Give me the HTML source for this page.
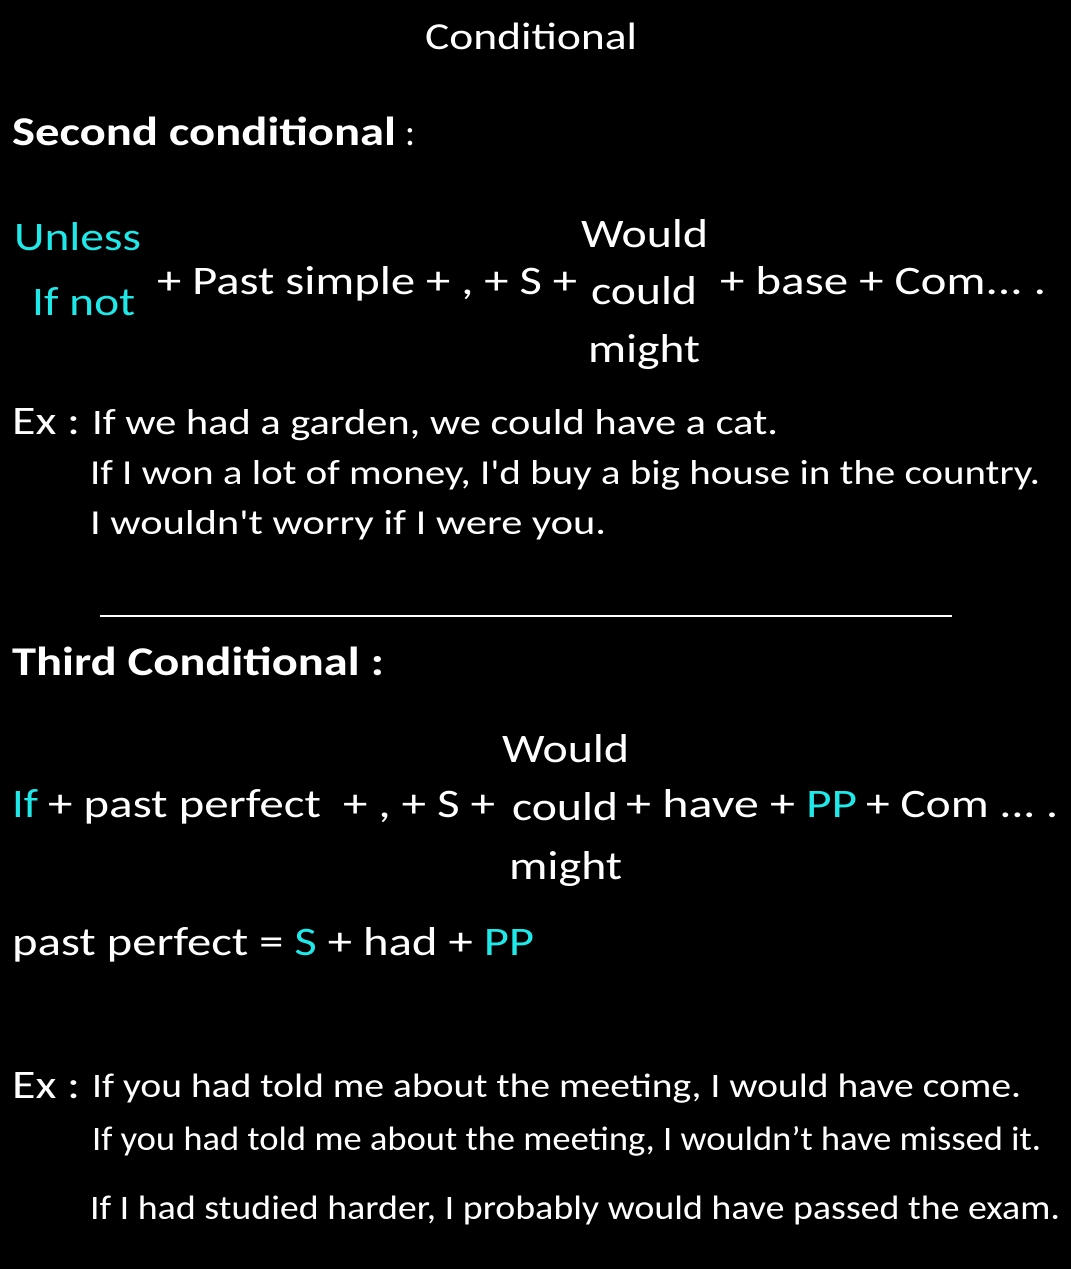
<!DOCTYPE html>
<html><head><meta charset="utf-8"><style>
html,body{margin:0;padding:0;background:#000;}
body{width:1071px;height:1269px;position:relative;overflow:hidden;font-family:"Carlito","Liberation Sans",sans-serif;color:#fff;}
.t{position:absolute;white-space:nowrap;line-height:1;transform-origin:0 0;}
.c{color:#1fe8e8;}
b{font-weight:bold;}
</style></head><body>
<span class="t" data-w="212" data-l="425" data-b="52" style="font-size:38px">Conditional</span>
<span class="t" data-w="384" data-l="12" data-b="148" style="font-size:40px"><b>Second conditional</b></span>
<span class="t" data-w="10" data-l="405" data-b="148" style="font-size:38px">:</span>
<span class="t c" data-w="127" data-l="14" data-b="253" style="font-size:40px">Unless</span>
<span class="t c" data-w="103" data-l="32" data-b="318" style="font-size:40px">If not</span>
<span class="t" data-w="420" data-l="157" data-b="297" style="font-size:40px">+ Past simple + , + S +</span>
<span class="t" data-w="127" data-l="581" data-b="250" style="font-size:40px">Would</span>
<span class="t" data-w="106" data-l="591" data-b="307" style="font-size:40px">could</span>
<span class="t" data-w="112" data-l="588" data-b="365" style="font-size:40px">might</span>
<span class="t" data-w="326" data-l="720" data-b="297" style="font-size:40px">+ base + Com... .</span>
<span class="t" data-w="68" data-l="12" data-b="437" style="font-size:40px">Ex :</span>
<span class="t" data-w="686" data-l="92" data-b="437" style="font-size:36px">If we had a garden, we could have a cat.</span>
<span class="t" data-w="950" data-l="90" data-b="488" style="font-size:35px">If I won a lot of money, I'd buy a big house in the country.</span>
<span class="t" data-w="516" data-l="90" data-b="538" style="font-size:35px">I wouldn't worry if I were you.</span>
<div style="position:absolute;left:100px;top:615px;width:852px;height:2px;background:#fff"></div>
<span class="t" data-w="372" data-l="12" data-b="678" style="font-size:40px"><b>Third Conditional :</b></span>
<span class="t" data-w="127" data-l="502" data-b="765" style="font-size:40px">Would</span>
<span class="t c" data-w="26" data-l="12" data-b="820" style="font-size:40px">If</span>
<span class="t" data-w="447" data-l="48" data-b="820" style="font-size:40px">+ past perfect&nbsp; + , + S +</span>
<span class="t" data-w="106" data-l="512" data-b="823" style="font-size:40px">could</span>
<span class="t" data-w="169" data-l="626" data-b="820" style="font-size:40px">+ have +</span>
<span class="t c" data-w="51" data-l="806" data-b="820" style="font-size:40px">PP</span>
<span class="t" data-w="192" data-l="866" data-b="820" style="font-size:40px">+ Com ... .</span>
<span class="t" data-w="113" data-l="509" data-b="882" style="font-size:40px">might</span>
<span class="t" data-w="522" data-l="12" data-b="958" style="font-size:40px">past perfect = <span class="c">S</span> + had + <span class="c">PP</span></span>
<span class="t" data-w="68" data-l="12" data-b="1101" style="font-size:40px">Ex :</span>
<span class="t" data-w="929" data-l="92" data-b="1101" style="font-size:34px">If you had told me about the meeting, I would have come.</span>
<span class="t" data-w="949" data-l="92" data-b="1154" style="font-size:34px">If you had told me about the meeting, I wouldn’t have missed it.</span>
<span class="t" data-w="970" data-l="90" data-b="1223" style="font-size:34px">If I had studied harder, I probably would have passed the exam.</span>
<script>
document.querySelectorAll('.t').forEach(function(e){
  var fs=parseFloat(e.style.fontSize);
  var w=parseFloat(e.getAttribute('data-w'));
  e.style.left=e.getAttribute('data-l')+'px';
  e.style.top=(parseFloat(e.getAttribute('data-b'))-0.905*fs)+'px';
  var a=e.getBoundingClientRect().width;
  if(a>0) e.style.transform='scaleX('+(w/a)+')';
});
</script>
</body></html>
